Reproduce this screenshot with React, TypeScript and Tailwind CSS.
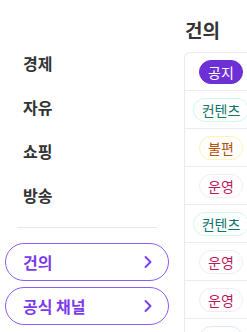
import React from 'react'
import { ChevronRight } from 'lucide-react'

const navItems = ['경제', '자유', '쇼핑', '방송']

const badgeStyles: Record<string, string> = {
  공지: 'bg-[#6d2fd6] border-[#6d2fd6] text-white',
  컨텐츠: 'bg-white border-[#d1fae5] text-[#0f766e]',
  불편: 'bg-white border-[#fef3b0] text-[#b45309]',
  운영: 'bg-white border-[#fce7f3] text-[#be185d]',
  질문: 'bg-white border-[#dbeafe] text-[#1d4ed8]',
}

const rows = ['공지', '컨텐츠', '불편', '운영', '컨텐츠', '운영', '운영']

export default function App() {
  return (
    <div
      className="flex w-[247px] h-[332px] overflow-hidden bg-white text-[#333]"
      style={{ fontFamily: '"Noto Sans CJK KR", "Noto Sans", sans-serif' }}
    >
      {/* Left panel */}
      <div className="flex flex-col w-[174px] shrink-0 pt-[41px]">
        {navItems.map((item) => (
          <div key={item} className="h-11 flex items-center px-[23px] text-base font-semibold">
            {item}
          </div>
        ))}
        <div className="mx-[17px] mt-[10px] border-t border-[#e5e7eb]" />
        <div className="flex flex-col gap-[6px] mt-[15px] ml-[5px] mr-[5px]">
          {['건의', '공식 채널'].map((label) => (
            <div
              key={label}
              className="h-[38px] flex items-center justify-between pl-[17px] pr-[10px] rounded-full border-[1.5px] border-[#8b5cf6] text-[#7c3aed] text-base font-bold"
            >
              <span>{label}</span>
              <ChevronRight size={20} strokeWidth={2.25} />
            </div>
          ))}
        </div>
      </div>
      {/* end Left panel */}
      {/* Right panel */}
      <div className="flex flex-col ml-[10px] pt-4 min-w-0">
        <h3 className="text-[19px] leading-7 font-bold mb-2 pl-px">건의</h3>
        <div className="border-l border-t border-[#ebebeb] rounded-tl-md w-[120px]">
          {rows.map((tag, i) => (
            <div key={i} className="h-[38px] border-b border-[#ebebeb] flex items-center">
              <div className="w-[72px] flex justify-center">
                <span
                  className={`shrink-0 h-6 px-2 flex items-center rounded-full border text-sm whitespace-nowrap ${badgeStyles[tag]}`}
                >
                  {tag}
                </span>
              </div>
            </div>
          ))}
          <div className="h-[38px] flex items-center">
            <div className="w-[72px] flex justify-center">
              <span className={`shrink-0 h-6 w-11 rounded-full border ${badgeStyles['질문']}`} />
            </div>
          </div>
        </div>
      </div>
      {/* end Right panel */}
    </div>
  )
}
